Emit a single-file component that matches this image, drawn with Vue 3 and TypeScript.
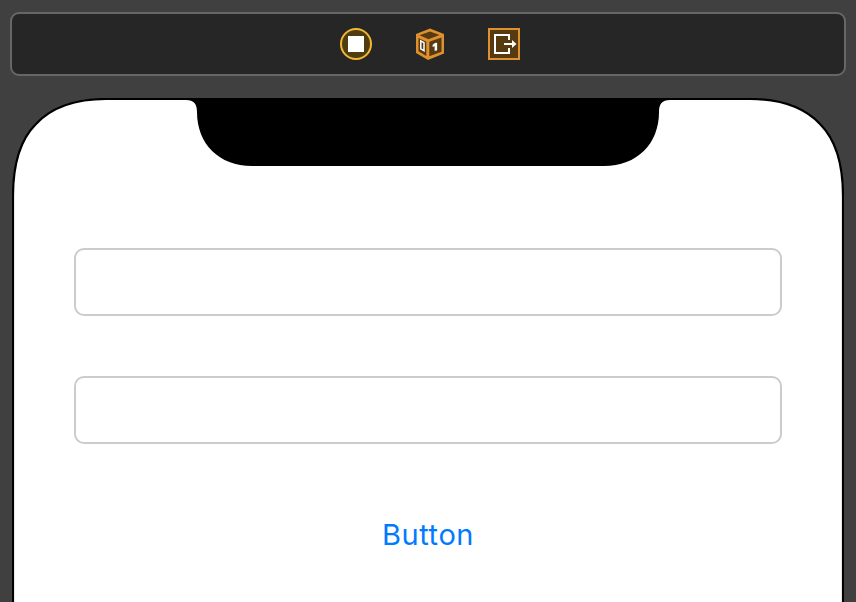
<script setup lang="ts">
import { ref } from 'vue'

const first = ref<string>('')
const second = ref<string>('')
</script>

<template>
  <main class="canvas">
    <header class="dock">
      <svg class="icon" viewBox="0 0 32 32">
        <circle cx="16" cy="16" r="15" fill="#4d3d10" stroke="#f4b731" stroke-width="2" />
        <path d="M8 8H24V24H8Z" fill="#fff" />
      </svg>
      <svg class="icon" viewBox="0 0 32 32">
        <path d="M16 .5L30 6V25.5L14 32L2 25V6Z" fill="#df902f" />
        <path d="M16 3.5L25.5 7L14.5 11.2L5.5 7.3Z" fill="#583a10" />
        <path d="M4.5 10L12.3 13.8V28L4.5 23.3Z" fill="#583a10" />
        <path d="M15.3 13.8L27.5 9.4V23.8L15.3 28.2Z" fill="#583a10" />
        <path d="M6.8 12.8L10 14.6V22.6L6.8 20.8Z" fill="none" stroke="#fff" stroke-width="1.5" />
        <path d="M18.8 16.8L21.2 15H23V22.2L20.8 22.8V18L18.8 18.8Z" fill="#fff" stroke="#fff" stroke-width=".3" />
      </svg>
      <svg class="icon" viewBox="0 0 32 32">
        <path d="M1 1H31V31H1Z" fill="#583a10" stroke="#df902f" stroke-width="2" />
        <path d="M21 12V7H7V25H21V20M16 16H25" fill="none" stroke="#fff" stroke-width="2" />
        <path d="M24 12L28.5 16L24 20Z" fill="#fff" />
      </svg>
    </header>
    <section class="phone">
      <svg class="frame" viewBox="0 0 832 504">
        <path d="M1 510V98C1 68 7 43 24 26C40 9 63 1 94 1H738C769 1 792 9 808 26C825 43 831 68 831 98V510" fill="#fff" stroke="#000" stroke-width="2.2" />
        <path d="M174 2C182 2 185 6 185 14C185 46 207 68 240 68H592C625 68 647 46 647 14C647 6 650 2 658 2V0H174Z" fill="#000" />
      </svg>
      <form class="form" @submit.prevent>
        <input v-model="first" class="field" type="text" />
        <input v-model="second" class="field" type="text" />
        <button class="action" type="submit">Button</button>
      </form>
    </section>
  </main>
</template>

<style>
body {
  margin: 0;
  background: #404040;
}
</style>

<style scoped>
.canvas {
  box-sizing: border-box;
  height: 602px;
  padding: 12px 10px 0;
  overflow: hidden;
  background: #404040;
}
.dock {
  box-sizing: border-box;
  display: flex;
  align-items: center;
  justify-content: center;
  gap: 42px;
  height: 64px;
  padding-right: 0;
  padding-left: 4px;
  border: 2px solid #666;
  border-radius: 9px;
  background: #262626;
}
.icon {
  width: 32px;
  height: 32px;
}
.phone {
  display: grid;
  margin: 22px 2px 0;
  height: 504px;
}
.frame,
.form {
  grid-area: 1 / 1;
}
.frame {
  width: 832px;
  height: 504px;
}
.form {
  display: flex;
  flex-direction: column;
  align-items: center;
  gap: 60px;
  padding: 150px 62px 0;
}
.field {
  box-sizing: border-box;
  width: 100%;
  height: 68px;
  padding: 0 14px;
  border: 2px solid #ccc;
  border-radius: 10px;
  outline: none;
  background: #fff;
  font: 28px Inter, sans-serif;
}
.action {
  margin-top: 12px;
  padding: 0;
  border: 0;
  background: none;
  color: #007aff;
  font: 400 29px/38px Inter, sans-serif;
  letter-spacing: 0.6px;
}
</style>
